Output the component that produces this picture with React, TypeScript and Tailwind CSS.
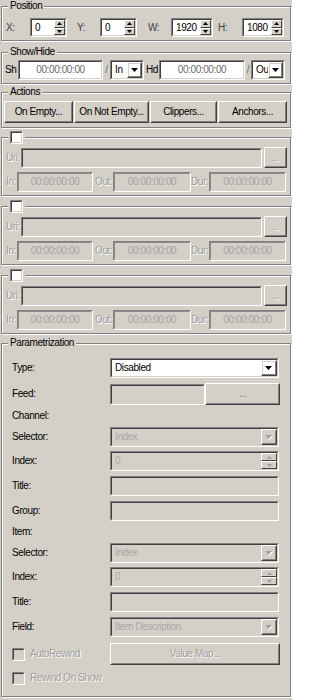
import type { ReactNode } from "react";

const SUNK_OUT = "border border-t-[#808080] border-l-[#808080] border-b-white border-r-white";
const SUNK_IN = "border border-t-[#404040] border-l-[#404040] border-b-[#d4d0c8] border-r-[#d4d0c8]";
const SOFT_IN = "border border-t-[#8c8c8c] border-l-[#8c8c8c] border-b-[#d4d0c8] border-r-[#d4d0c8]";
const EMBOSS = "text-[#9c9c9c] [text-shadow:1px_1px_0_#fff]";

type Box = { className?: string; inner?: string; children?: ReactNode; soft?: boolean };

const Sunken = ({ className = "", inner = "", children, soft }: Box) => (
  <div className={`shrink-0 ${SUNK_OUT} ${className}`}>
    <div className={`h-full w-full flex items-center overflow-hidden whitespace-nowrap ${soft ? SOFT_IN : SUNK_IN} ${inner}`}>
      {children}
    </div>
  </div>
);

const Raised = ({ className = "", children }: Box) => (
  <div className={`shrink-0 border border-t-white border-l-white border-b-[#404040] border-r-[#404040] ${className}`}>
    <div className="h-full w-full flex items-center justify-center whitespace-nowrap border border-t-[#d4d0c8] border-l-[#d4d0c8] border-b-[#808080] border-r-[#808080]">
      {children}
    </div>
  </div>
);

const Group = ({ title, className = "", children }: { title: ReactNode; className?: string; children?: ReactNode }) => (
  <div className={`border border-[#808080] shadow-[inset_1px_1px_0_#fff,1px_1px_0_#fff] ${className}`}>
    <div className="-mt-[7px] ml-[6px] w-fit px-[2px] bg-[#d4d0c8] leading-[12px] min-h-[12px] flex items-center">{title}</div>
    {children}
  </div>
);

const Check = ({ disabled }: { disabled?: boolean }) => (
  <Sunken className="w-[13px] h-[13px]" inner={disabled ? "bg-[#d4d0c8]" : "bg-white"} />
);

const SpinHalf = ({ up, color }: { up?: boolean; color: string }) => (
  <div className="flex-1 flex items-center justify-center bg-[#d4d0c8] border border-t-white border-l-white border-b-[#404040] border-r-[#404040]">
    <svg width="5" height="3" viewBox="0 0 5 3">
      <polygon points={up ? "0,3 2.5,0 5,3" : "0,0 5,0 2.5,3"} fill={color} />
    </svg>
  </div>
);

const Spinner = ({ value, className = "", disabled, spinW = "w-[11px]" }: { value: string; className?: string; disabled?: boolean; spinW?: string }) => {
  const c = disabled ? "#a0a0a0" : "#000";
  return (
    <Sunken className={className} inner={disabled ? "bg-[#d4d0c8]" : "bg-white"}>
      <span className={`flex-1 pl-[3px] ${disabled ? "text-[#a8a8a8]" : "text-black"}`}>{value}</span>
      <div className={`flex flex-col h-full ${spinW}`}>
        <SpinHalf up color={c} />
        <SpinHalf color={c} />
      </div>
    </Sunken>
  );
};

const Combo = ({ value, className = "", disabled, btnW = "w-[16px]" }: { value: string; className?: string; disabled?: boolean; btnW?: string }) => (
  <Sunken className={className} inner={disabled ? "bg-[#d4d0c8]" : "bg-white"}>
    <span className={`flex-1 pl-[3px] overflow-hidden ${disabled ? "text-[#a8a8a8]" : "text-black"}`}>{value}</span>
    <Raised className={`h-full ${btnW}`}>
      <svg width="8" height="5" viewBox="0 0 8 5">
        {disabled && <polygon points="1,1 8,1 4.5,5" fill="#fff" />}
        <polygon points="0,0 7,0 3.5,4" fill={disabled ? "#a0a0a0" : "#000"} />
      </svg>
    </Raised>
  </Sunken>
);

const TimeBox = ({ className = "" }: { className?: string }) => (
  <Sunken soft className={`h-[20px] ${className}`} inner="justify-center text-[#a3a3a3]">
    00:00:00:00
  </Sunken>
);

const MediaGroup = ({ className = "" }: { className?: string }) => (
  <Group className={`w-[290px] pb-[3px] ${className}`} title={<Check />}>
    <div className="mt-[3px] h-[21px] flex items-center">
      <span className={`shrink-0 w-[19px] pl-[4px] whitespace-nowrap ${EMBOSS}`}>Uri:</span>
      <Sunken className="w-[241px] h-[20px]" />
      <Raised className="ml-[2px] w-[23px] h-[21px]">
        <span className={EMBOSS}>...</span>
      </Raised>
    </div>
    <div className="mt-[4px] h-[20px] flex items-center whitespace-nowrap">
      <span className={`shrink-0 w-[15px] pl-[4px] ${EMBOSS}`}>In:</span>
      <TimeBox className="w-[76px]" />
      <span className={`shrink-0 w-[20px] pl-[2px] ${EMBOSS}`}>Out:</span>
      <TimeBox className="w-[78px]" />
      <span className={`shrink-0 w-[18px] ${EMBOSS}`}>Dur:</span>
      <TimeBox className="w-[77px]" />
    </div>
  </Group>
);

const Row = ({ label, className = "", children }: { label: ReactNode; className?: string; children?: ReactNode }) => (
  <div className={`flex items-center ${className}`}>
    <div className="shrink-0 w-[108px] pl-[10px] flex items-center">{label}</div>
    {children}
  </div>
);

export default function App() {
  return (
    <div className="w-[292px] h-[700px] overflow-hidden bg-[#d4d0c8] pl-[1px] pt-[6px] font-['Liberation_Sans',Arial,sans-serif] text-[10px] leading-[12px] tracking-[-0.4px] text-black">
      <Group className="w-[290px] pb-[3px]" title="Position">
        <div className="mt-[6px] h-[19px] flex items-center text-[#404040]">
          <span className="w-[28px] pl-[4px]">X:</span>
          <Spinner value="0" className="w-[37px] h-[19px]" />
          <span className="w-[33px] pl-[10px]">Y:</span>
          <Spinner value="0" className="w-[37px] h-[19px]" />
          <span className="w-[34px] pl-[11px]">W:</span>
          <Spinner value="1920" className="w-[42px] h-[19px]" />
          <span className="w-[29px] pl-[5px]">H:</span>
          <Spinner value="1080" className="w-[42px] h-[19px]" />
        </div>
      </Group>

      <Group className="mt-[11px] w-[290px] pb-[3px]" title="Show/Hide">
        <div className="mt-[2px] h-[20px] flex items-center whitespace-nowrap">
          <span className="shrink-0 w-[16px] pl-[3px]">Sh</span>
          <Sunken className="w-[85px] h-[20px]" inner="bg-white justify-center text-[#6b6b6b]">00:00:00:00</Sunken>
          <span className="shrink-0 w-[7px] text-center text-[#6b6b6b]">/</span>
          <Combo value="In" className="w-[34px] h-[20px]" btnW="w-[15px]" />
          <span className="shrink-0 w-[15px] pl-[2px]">Hd</span>
          <Sunken className="w-[86px] h-[20px]" inner="bg-white justify-center text-[#6b6b6b]">00:00:00:00</Sunken>
          <span className="shrink-0 w-[6px] text-center text-[#6b6b6b]">/</span>
          <Combo value="Ou" className="w-[34px] h-[20px]" btnW="w-[15px]" />
        </div>
      </Group>

      <Group className="mt-[8px] w-[290px] pb-[4px]" title="Actions">
        <div className="mt-[3px] h-[22px] pl-[2px] flex gap-[1px]">
          <Raised className="w-[69px] h-[22px]">On Empty...</Raised>
          <Raised className="w-[75px] h-[22px]">On Not Empty...</Raised>
          <Raised className="w-[67px] h-[22px]">Clippers...</Raised>
          <Raised className="w-[69px] h-[22px]">Anchors...</Raised>
        </div>
      </Group>

      <MediaGroup className="mt-[9px]" />
      <MediaGroup className="mt-[10px]" />
      <MediaGroup className="mt-[10px]" />

      <Group className="mt-[9px] w-[290px] pb-[9px]" title="Parametrization">
        <Row label="Type:" className="mt-[9px] h-[20px]">
          <Combo value="Disabled" className="w-[169px] h-[20px]" />
        </Row>
        <Row label="Feed:" className="mt-[5px] h-[22px]">
          <Sunken className="w-[95px] h-[21px]" inner="bg-[#d4d0c8]" />
          <Raised className="w-[75px] h-[22px]">
            <span className="text-[#7a7890]">...</span>
          </Raised>
        </Row>
        <Row label="Channel:" className="h-[22px]" />
        <Row label="Selector:" className="h-[20px]">
          <Combo value="Index" disabled className="w-[169px] h-[20px]" />
        </Row>
        <Row label="Index:" className="mt-[4px] h-[20px]">
          <Spinner value="0" disabled className="w-[169px] h-[20px]" spinW="w-[16px]" />
        </Row>
        <Row label="Title:" className="mt-[5px] h-[20px]">
          <Sunken className="w-[169px] h-[20px]" inner="bg-[#d4d0c8]" />
        </Row>
        <Row label="Group:" className="mt-[5px] h-[20px]">
          <Sunken className="w-[169px] h-[20px]" inner="bg-[#d4d0c8]" />
        </Row>
        <Row label="Item:" className="h-[22px]" />
        <Row label="Selector:" className="h-[20px]">
          <Combo value="Index" disabled className="w-[169px] h-[20px]" />
        </Row>
        <Row label="Index:" className="mt-[4px] h-[20px]">
          <Spinner value="0" disabled className="w-[169px] h-[20px]" spinW="w-[16px]" />
        </Row>
        <Row label="Title:" className="mt-[5px] h-[20px]">
          <Sunken className="w-[169px] h-[20px]" inner="bg-[#d4d0c8]" />
        </Row>
        <Row label="Field:" className="mt-[5px] h-[20px]">
          <Combo value="Item Description" disabled className="w-[169px] h-[20px]" />
        </Row>
        <Row
          label={
            <>
              <Check disabled />
              <span className={`ml-[5px] ${EMBOSS}`}>AutoRewind</span>
            </>
          }
          className="mt-[6px] h-[22px]"
        >
          <Raised className="w-[170px] h-[22px]">
            <span className={EMBOSS}>Value Map...</span>
          </Raised>
        </Row>
        <Row
          label={
            <>
              <Check disabled />
              <span className={`ml-[5px] whitespace-nowrap ${EMBOSS}`}>Rewind On Show</span>
            </>
          }
          className="mt-[4px] h-[18px]"
        />
      </Group>
    </div>
  );
}
